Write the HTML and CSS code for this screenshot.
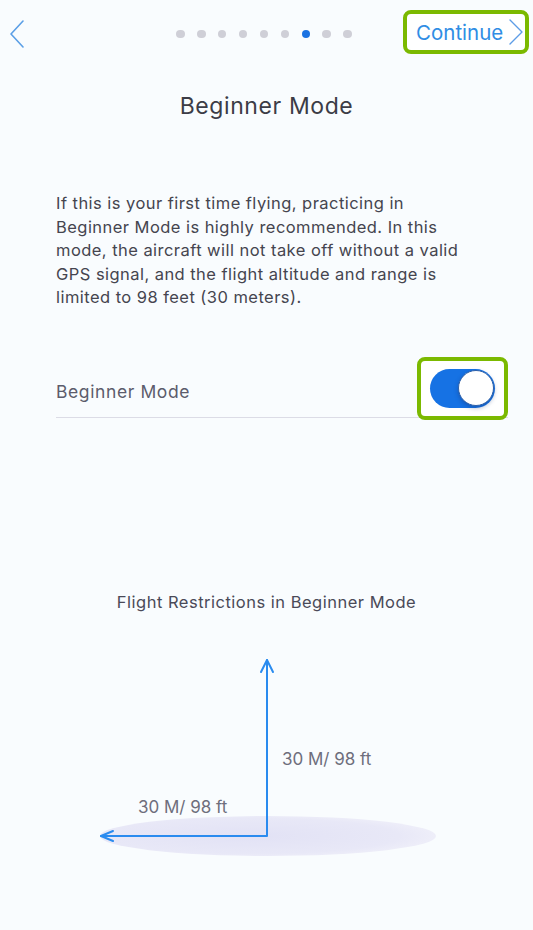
FILE: index.html
```html
<!DOCTYPE html>
<html lang="en">
<head>
    <meta charset="UTF-8">
    <meta name="viewport" content="width=device-width, initial-scale=1.0">
    <title>Beginner Mode</title>
    <link rel="stylesheet" href="styles.css">
</head>
<body>
    <div class="screen">
        <header class="topbar">
            <button class="back" aria-label="Back">
                <svg width="16" height="28" viewBox="0 0 16 28">
                    <polyline points="14,1 2,14 14,27" fill="none" stroke="#5b9fe6" stroke-width="1.6" stroke-linecap="round" stroke-linejoin="round"/>
                </svg>
            </button>
            <ol class="steps">
                <li></li><li></li><li></li><li></li><li></li><li></li>
                <li class="active"></li><li></li><li></li>
            </ol>
            <div class="next-wrap">
                <button class="next">
                    Continue
                    <svg width="14" height="26" viewBox="0 0 14 26">
                        <polyline points="1,1 13,13 1,25" fill="none" stroke="#5d9de6" stroke-width="1.4" stroke-linecap="round" stroke-linejoin="round"/>
                    </svg>
                </button>
            </div>
        </header>

        <h1 class="title">Beginner Mode</h1>

        <div class="content">
            <p class="intro">If this is your first time flying, practicing in Beginner Mode is highly recommended. In this mode, the aircraft will not take off without a valid GPS signal, and the flight altitude and range is limited to 98 feet (30 meters).</p>

            <div class="setting">
                <span class="setting-label">Beginner Mode</span>
                <div class="switch-frame">
                    <span class="switch on"><span class="knob"></span></span>
                </div>
            </div>
        </div>

        <section class="restrictions">
            <h2>Flight Restrictions in Beginner Mode</h2>
            <div class="diagram">
                <svg width="533" height="240" viewBox="0 0 533 240">
                    <defs>
                        <radialGradient id="ground" cx="0.45" cy="0.5" r="0.55">
                            <stop offset="0" stop-color="#e2e2f5"/>
                            <stop offset="0.8" stop-color="#e8e8f7"/>
                            <stop offset="1" stop-color="#eeeef9"/>
                        </radialGradient>
                    </defs>
                    <ellipse cx="268" cy="197" rx="168" ry="20" fill="url(#ground)"/>
                    <g fill="none" stroke="#2a8bef" stroke-width="2" stroke-linecap="round" stroke-linejoin="round">
                        <polyline points="267,21 267,197 101,197"/>
                        <polyline points="261,33 267,21 273,33"/>
                        <polyline points="113,192 101,197 113,202"/>
                    </g>
                </svg>
                <span class="measure up">30 M/ 98 ft</span>
                <span class="measure side">30 M/ 98 ft</span>
            </div>
        </section>
    </div>
</body>
</html>
```

FILE: styles.css
```css
* {
    margin: 0;
    padding: 0;
    box-sizing: border-box;
}
body {
    font-family: Inter, 'Liberation Sans', sans-serif;
    background-color: #f9fcfe;
    color: #45454f;
}
button {
    background: none;
    border: none;
    font-family: inherit;
    cursor: pointer;
}
.screen {
    width: 533px;
    min-height: 930px;
}
.topbar {
    height: 66px;
    display: grid;
    grid-template-columns: 1fr auto 1fr;
    align-items: center;
}
.back {
    justify-self: start;
    margin-left: 9px;
    margin-top: 1px;
    display: flex;
}
.steps {
    list-style: none;
    display: flex;
    gap: 12.4px;
    margin-right: 5px;
    margin-top: 2px;
}
.steps li {
    width: 8.5px;
    height: 8.5px;
    border-radius: 50%;
    background-color: #cfcfd7;
}
.steps li.active {
    background-color: #1a72e2;
}
.next-wrap {
    justify-self: end;
    margin-right: 4px;
    margin-top: -2px;
}
.next {
    display: flex;
    align-items: center;
    gap: 6px;
    width: 126px;
    height: 44px;
    padding: 0 0 0 9px;
    border: 4px solid #7bb900;
    border-radius: 8px;
    background-color: #fff;
    color: #2f8de4;
    font-size: 20.5px;
}
.title {
    margin-top: 26px;
    text-align: center;
    font-size: 23px;
    line-height: 28px;
    letter-spacing: 0.6px;
    font-weight: 400;
    color: #3c3c46;
}
.content {
    padding: 0 25px 0 56px;
}
.intro {
    margin-top: 72px;
    margin-right: 36px;
    font-size: 16.5px;
    line-height: 23.5px;
    letter-spacing: 0.45px;
    color: #45454f;
}
.setting {
    margin-top: 47px;
    height: 61px;
    display: flex;
    justify-content: space-between;
    align-items: flex-start;
    border-bottom: 1px solid #dcdce6;
}
.setting-label {
    padding-top: 25px;
    font-size: 17.5px;
    line-height: 20px;
    letter-spacing: 0.6px;
    color: #5c5c6c;
}
.switch-frame {
    width: 91px;
    height: 63px;
    border: 4px solid #7bb900;
    border-radius: 8px;
    background-color: #fff;
    display: flex;
    align-items: center;
    justify-content: center;
}
.switch {
    width: 65px;
    height: 39px;
    border-radius: 20px;
    background-color: #1672e4;
    display: flex;
    align-items: center;
    justify-content: flex-end;
    padding: 0 1px;
}
.knob {
    width: 36px;
    height: 36px;
    border-radius: 50%;
    background-color: #fff;
    border: 1px solid #2c5fa8;
    box-shadow: 0 2px 4px rgba(20, 50, 110, 0.35);
}
.restrictions h2 {
    margin-top: 174px;
    text-align: center;
    font-size: 16.5px;
    line-height: 20px;
    letter-spacing: 0.5px;
    font-weight: 400;
    color: #4a4a58;
}
.diagram {
    position: relative;
    margin-top: 27px;
    height: 240px;
}
.diagram svg {
    display: block;
}
.measure {
    position: absolute;
    font-size: 17px;
    line-height: 20px;
    color: #6e6e7c;
    white-space: nowrap;
}
.measure.up {
    left: 282px;
    top: 110px;
}
.measure.side {
    left: 138px;
    top: 158px;
}
```
